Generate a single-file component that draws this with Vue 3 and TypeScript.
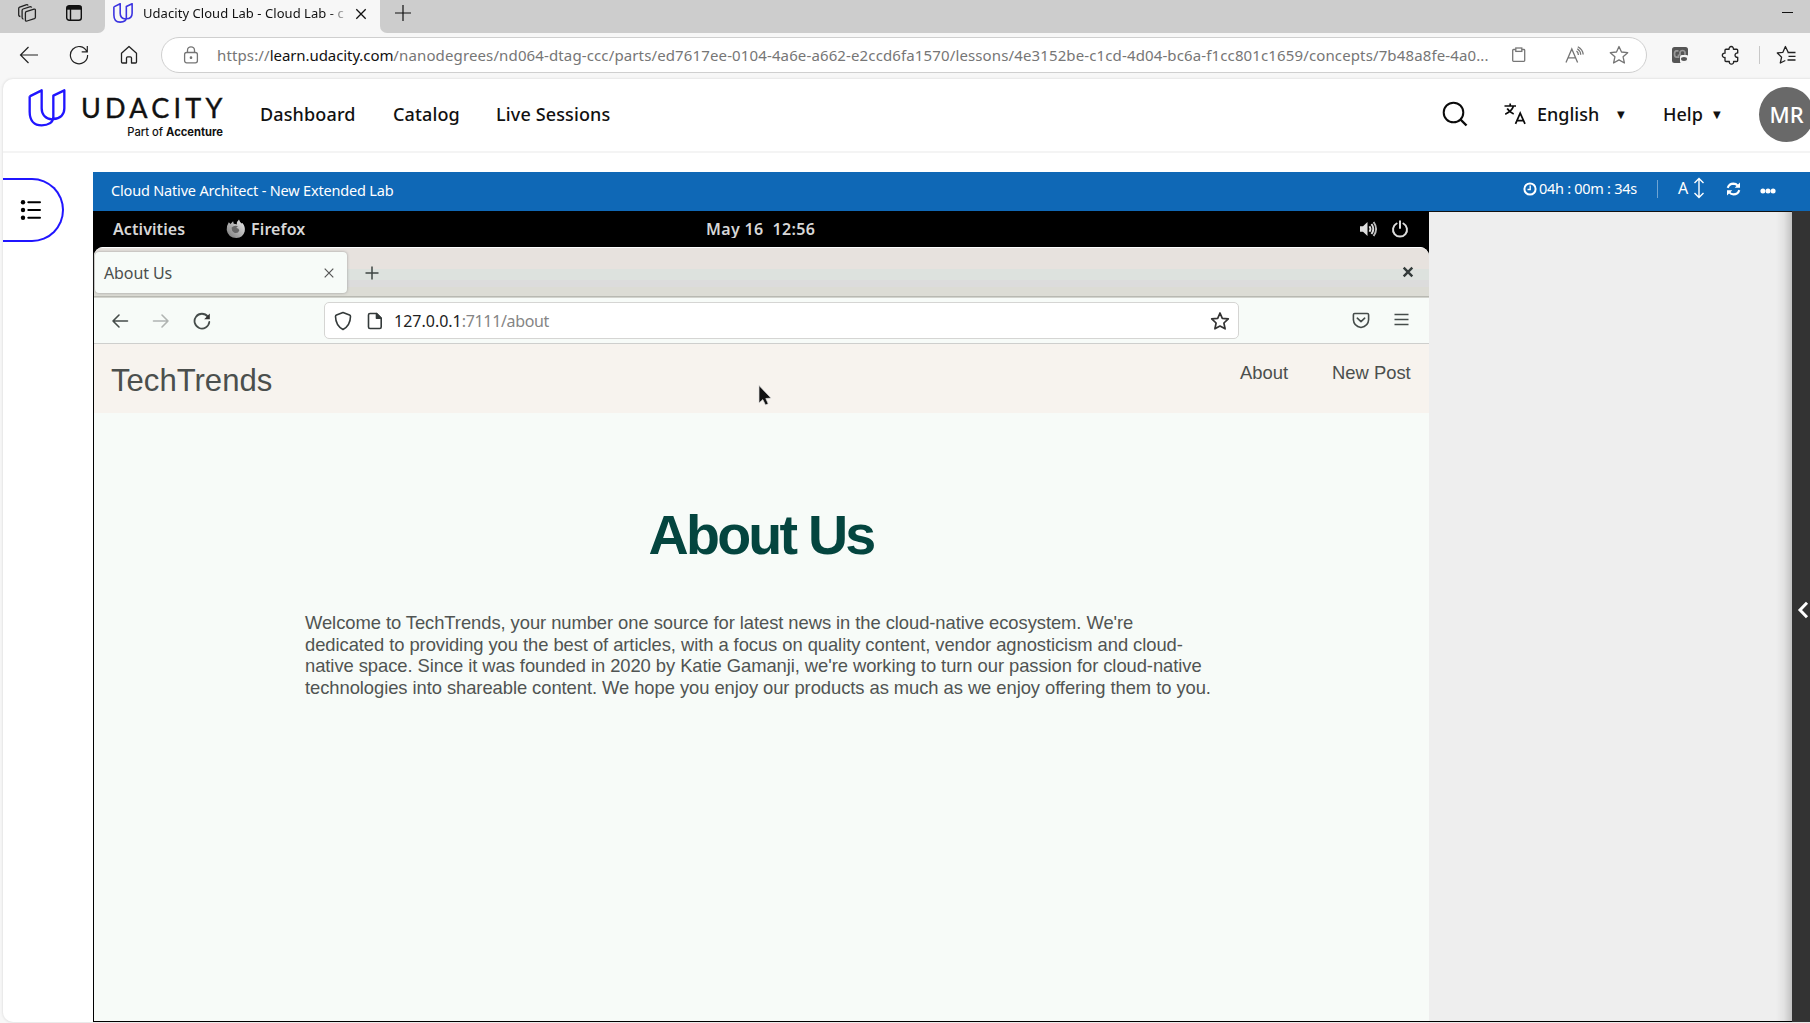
<script setup lang="ts">
import { ref } from 'vue'

const navLinks = ref<string[]>(['Dashboard', 'Catalog', 'Live Sessions'])
const aboutLines: string[] = [
  "Welcome to TechTrends, your number one source for latest news in the cloud-native ecosystem. We're",
  'dedicated to providing you the best of articles, with a focus on quality content, vendor agnosticism and cloud-',
  "native space. Since it was founded in 2020 by Katie Gamanji, we're working to turn our passion for cloud-native",
  'technologies into shareable content. We hope you enjoy our products as much as we enjoy offering them to you.',
]
</script>

<template>
  <div class="window">
    <div class="tabstrip">
      <div class="strip-left">
        <svg class="i-work" width="20" height="20" viewBox="0 0 20 20" fill="none" stroke="#222" stroke-width="1.3" stroke-linejoin="round">
          <path d="M9.2 8.6 17 6.2q1.4-.3 1.4 1v7q0 1-1 1.400L10 18q-1.600.5-1.600-1.100v-7q0-1 .8-1.300z" />
          <path d="M6.500 16.200q-1.400-.1-1.400-1.600V7.400q0-1 1-1.400l6.500-2.200q1.700-.4 2 .9" />
          <path d="M3.400 13.500q-1.700 0-1.700-1.700V5.500q0-1 1-1.400l6.300-2.300q1.600-.5 2.100.6" />
        </svg>
        <svg class="i-tabs" width="18" height="18" viewBox="0 0 18 18" fill="none" stroke="#111" stroke-width="1.400">
          <rect x="1.700" y="1.700" width="14.600" height="14.600" rx="2.500" /><path d="M1.700 3.800h14.600" stroke-width="3.800" /><path d="M5.500 5v11" />
        </svg>
      </div>
      <div class="tab">
        <svg class="i-fav" width="20" height="20" viewBox="86 267 114 114" fill="none" stroke="#3a32e0" stroke-width="9" stroke-linejoin="round">
          <path d="M91 289 127 271V325C127 345 140 357 158 358M91 289V335C91 362 105 376 127 376C145 376 162 369 162 350V287L195 271V325C195 345 182 356 162 357" />
        </svg>
        <span class="tab-title">Udacity Cloud Lab - Cloud Lab - c</span>
        <svg class="i-close" width="12" height="12" viewBox="0 0 12 12" stroke="#111" stroke-width="1.300"><path d="M1.300 1.300l9.400 9.400M10.700 1.300 1.300 10.700" /></svg>
      </div>
      <div class="strip-right">
        <svg class="i-plus" width="16" height="16" viewBox="0 0 16 16" stroke="#111" stroke-width="1.200"><path d="M0 8h16M8 0v16" /></svg>
        <i class="minimize"></i>
      </div>
    </div>

    <div class="toolbar">
      <svg class="i-back" width="20" height="20" viewBox="0 0 20 20" fill="none" stroke="#222" stroke-width="1.200"><path d="M19 10H1.500M9.500 2 1.500 10l8 8" /></svg>
      <svg class="i-reload" width="20" height="20" viewBox="0 0 20 20" fill="none" stroke="#222" stroke-width="1.200"><path d="M17.800 6.500A8.600 8.600 0 1 0 18.600 10M18.300 1v5.800h-5.600" /></svg>
      <svg class="i-home" width="18" height="20" viewBox="0 0 18 20" fill="none" stroke="#222" stroke-width="1.300" stroke-linejoin="round"><path d="M1.500 8.200 9 1.500l7.500 6.700V17q0 1-1 1h-4v-5q0-1.200-1.200-1.200H7.700Q6.500 11.800 6.500 13v5h-4q-1 0-1-1z" /></svg>
      <div class="address">
        <svg class="i-lock" width="16" height="18" viewBox="0 0 16 18" fill="none" stroke="#757575" stroke-width="1.300"><rect x="1.600" y="6.500" width="12.800" height="10.300" rx="2" /><path d="M4.500 6.500V4.300a3.500 3.500 0 0 1 7 0v2.200" /><circle cx="8" cy="11.700" r=".7" fill="#757575" /></svg>
        <span class="url">https://<b>learn.udacity.com</b>/nanodegrees/nd064-dtag-ccc/parts/ed7617ee-0104-4a6e-a662-e2ccd6fa1570/lessons/4e3152be-c1cd-4d04-bc6a-f1cc801c1659/concepts/7b48a8fe-4a0...</span>
        <svg class="i-clip" width="16" height="16" viewBox="0 0 16 16" fill="none" stroke="#777" stroke-width="1.300"><rect x="1.700" y="2.500" width="12" height="11.800" rx=".8" /><rect x="4.800" y="1" width="6" height="3.400" fill="#fff" /></svg>
        <svg class="i-read" width="20" height="18" viewBox="0 0 20 18" fill="none" stroke="#757575" stroke-width="1.300"><path d="M1 16.500 6.800 3 12.600 16.500M3.100 11.800h7.500M11.500 5q1.800 1.200 1.900 4M12.300 2.800q3.200 2 3.400 6M12.800.8q5 2.700 5.400 7.700" /></svg>
        <svg class="i-star" width="20" height="20" viewBox="0 0 20 20" fill="none" stroke="#757575" stroke-width="1.300" stroke-linejoin="round"><path d="M10 1.500 12.500 7l6.200.7-4.600 4.100 1.300 6.200L10 14.900 4.600 18l1.300-6.200L1.300 7.700 7.500 7z" /></svg>
      </div>
      <svg class="i-ext" width="18" height="18" viewBox="0 0 18 18"><rect x="1" y="1" width="16" height="16" rx="2.500" fill="#555" /><path d="M7.500 4.800H5.200Q3.500 5 3.500 8t2 3.200h2V8.500M9 9.500V6.300Q9.300 4.500 11.500 4.500t2.500 1.800V9" fill="none" stroke="#999" stroke-width="1.700" /><rect x="9" y="9" width="8.500" height="8.500" rx="2" fill="#f5f5f5" /><ellipse cx="13" cy="13" rx="3" ry="1.900" fill="#555" /></svg>
      <svg class="i-puzzle" width="20" height="20" viewBox="0 0 20 20" fill="none" stroke="#222" stroke-width="1.350" stroke-linejoin="round"><path d="M5 4.200h3.100a2.200 2.200 0 1 1 4.300 0h3.300q1 0 1 1V8a2.200 2.200 0 1 0 0 4.300v3.200q0 1-1 1h-3.100a2.200 2.200 0 1 1-4.300 0H5q-1 0-1-1v-3a2.200 2.200 0 1 1 0-4.300V5.200q0-1 1-1z" /></svg>
      <i class="tool-sep"></i>
      <svg class="i-favs" width="20" height="20" viewBox="0 0 20 20" fill="none" stroke="#222" stroke-width="1.300" stroke-linejoin="round"><path d="M12.300 7.500 9.400 1.500 6.900 7.300 1.300 8l4.300 4.200L4.300 18l5-2.500M11.500 7.500h8M12.500 11.300h7M11.500 15h8" /></svg>
    </div>

    <div class="page">
      <header class="site-head">
        <svg class="i-logo" width="38" height="38" viewBox="86 267 114 114" fill="none" stroke="#2015ff" stroke-width="7" stroke-linejoin="round">
          <path d="M91 289 127 271V325C127 345 140 357 158 358M91 289V335C91 362 105 376 127 376C145 376 162 369 162 350V287L195 271V325C195 345 182 356 162 357" />
        </svg>
        <div class="brand">
          <span class="wordmark">UDACITY</span>
          <span class="partof">Part of <b>Accenture</b></span>
        </div>
        <nav class="site-nav"><a v-for="(l, i) in navLinks" :key="l" :class="'nav-' + i">{{ l }}</a></nav>
        <svg class="i-search" width="26" height="26" viewBox="0 0 26 26" fill="none" stroke="#0b0b0b" stroke-width="2"><circle cx="11.500" cy="11.500" r="9.800" /><path d="m18.500 18.500 6 6" stroke-width="2.400" /></svg>
        <svg class="i-lang" width="22" height="22" viewBox="0 0 22 22" fill="none" stroke="#0b0b0b" stroke-width="1.700"><path d="M.5 3h11.500M6.200.500V3M1.200 11.300Q8 8 9.500 3M3.200 5.500q2 3.500 6.500 5.500M11.500 20.800l4.700-10.600L21 20.800M13 17.600h6.400" /></svg>
        <span class="lang">English</span><span class="caret c1">▼</span>
        <span class="help">Help</span><span class="caret c2">▼</span>
        <div class="avatar">MR</div>
      </header>

      <div class="body">
        <aside class="side">
          <div class="pill">
            <svg width="22" height="22" viewBox="0 0 22 22" stroke="#000" stroke-width="2" stroke-linecap="round"><path d="M8.300 3.300H20M8.300 11H20M8.300 18.800H20" /><g stroke="none"><circle cx="3" cy="3.300" r="2.200" /><circle cx="3" cy="11" r="2.200" /><circle cx="3" cy="18.800" r="2.200" /></g></svg>
          </div>
        </aside>

        <main class="lab">
          <div class="lab-bar">
            <span class="lab-title">Cloud Native Architect - New Extended Lab</span>
            <svg class="i-clock" width="14" height="14" viewBox="0 0 14 14" fill="none" stroke="#fff" stroke-width="2"><circle cx="7" cy="7" r="5.600" /><path d="M7.200 3.500v4H4.500" stroke-width="1.400" /></svg>
            <span class="timer">04h : 00m : 34s</span>
            <i class="lab-sep"></i>
            <span class="font-a">A</span>
            <svg class="i-updown" width="12" height="22" viewBox="0 0 12 22" fill="none" stroke="#fff" stroke-width="1.400"><path d="M6 1.500v19M1.500 6 6 1.500 10.500 6M1.500 16 6 20.500l4.500-4.500" /></svg>
            <svg class="i-sync" width="15" height="14" viewBox="0 0 15 14" fill="none" stroke="#fff" stroke-width="2.100"><path d="M1.700 5.900Q3 1.700 7.500 1.600q2.500 0 4.200 2M13.300 8.100Q12 12.300 7.500 12.400q-2.500 0-4.200-2" /><path d="M14 .5v5.300H8.700zM1 13.500V8.200h5.300z" fill="#fff" stroke="none" /></svg>
            <svg class="i-dots" width="16" height="6" viewBox="0 0 16 6" fill="#fff"><circle cx="2.900" cy="3" r="2.500" /><circle cx="8" cy="3" r="2.500" /><circle cx="13.100" cy="3" r="2.500" /></svg>
          </div>

          <div class="lab-body">
            <section class="remote">
              <div class="gnome">
                <span class="activities">Activities</span>
                <svg class="i-fox" width="20" height="20" viewBox="0 0 20 20"><defs><linearGradient id="fox" x1="1" y1="0" x2="0" y2="1"><stop offset="0" stop-color="#eee" /><stop offset="1" stop-color="#777" /></linearGradient></defs><path d="M2.800 3.200 4.500 5l2.600-2.700.6 2.500q1.800 0 3 .7Q10.500 2.500 13 .5q.5 2.300 2.800 4L16.500 4q3.200 4 2.200 8.500Q17 18.500 10.500 19 2 18.800.700 11 .5 6.500 2.800 3.200z" fill="url(#fox)" /><path d="M7 7.500q3-1.500 5 0-2 .5-1.500 1.500 2.500 0 2.800 2.500-1.500 3.500-5 2.200Q5.500 12 5.500 8.800z" fill="#666" /></svg>
                <span class="ff">Firefox</span>
                <span class="clock">May 16&nbsp; 12:56</span>
                <svg class="i-vol" width="19" height="18" viewBox="0 0 19 18" fill="none" stroke="#ddd" stroke-width="1.900"><path d="M1 6.200h3L8.500 2v14L4 11.800H1z" fill="#ddd" stroke="none" /><path d="M10.500 6.200q2 2.800 0 5.600M12.500 4q3.600 5 0 10" /><path d="M14.600 2q5 7 0 14" stroke="#bbb" /></svg>
                <svg class="i-power" width="18" height="18" viewBox="0 0 18 18" fill="none" stroke="#ddd" stroke-width="2" stroke-linecap="round"><path d="M5.600 3.500a7 7 0 1 0 6.800 0M9 1.200V8" /></svg>
              </div>
              <div class="ff-tabs">
                <div class="ff-tab">
                  <span>About Us</span>
                  <svg width="10" height="10" viewBox="0 0 10 10" stroke="#555" stroke-width="1.200"><path d="m.7.7 8.600 8.600M9.300.7.7 9.300" /></svg>
                </div>
                <svg class="ff-plus" width="14" height="14" viewBox="0 0 14 14" stroke="#3e4543" stroke-width="1.500"><path d="M.5 7h13M7 .5v13" /></svg>
                <svg class="ff-close" width="12" height="12" viewBox="0 0 12 12" stroke="#343c3b" stroke-width="2.400"><path d="m1.700 1.700 8.600 8.600M10.300 1.700 1.700 10.300" /></svg>
              </div>
              <div class="ff-bar">
                <svg class="f-back" width="18" height="18" viewBox="0 0 18 18" fill="none" stroke="#454c4a" stroke-width="1.600" stroke-linecap="round" stroke-linejoin="round"><path d="M16.500 9H2M8 3 2 9l6 6" /></svg>
                <svg class="f-fwd" width="18" height="18" viewBox="0 0 18 18" fill="none" stroke="#b0b4b2" stroke-width="1.600" stroke-linecap="round" stroke-linejoin="round"><path d="M1.500 9H16M10 3l6 6-6 6" /></svg>
                <svg class="f-reload" width="18" height="18" viewBox="0 0 18 18" fill="none" stroke="#454c4a" stroke-width="1.800" stroke-linecap="round"><path d="M14.800 4.600A7.400 7.400 0 1 0 16.300 10" /><path d="M16.800 1.500v5.700h-5.600z" fill="#333" stroke="none" /></svg>
                <div class="ff-url">
                  <svg class="f-shield" width="18" height="20" viewBox="0 0 18 20" fill="none" stroke="#343a3a" stroke-width="1.600" stroke-linejoin="round"><path d="M9 1.500 15.500 4q1 .4 1 1.400-.2 9-7.500 13.100Q1.700 14.400 1.500 5.400q0-1 1-1.400z" /></svg>
                  <svg class="f-doc" width="16" height="18" viewBox="0 0 16 18" fill="none" stroke="#343a3a" stroke-width="1.600" stroke-linejoin="round"><path d="M3 1.500h6.500l4.700 4.700V15q0 1.500-1.500 1.500H3Q1.500 16.500 1.500 15V3Q1.500 1.500 3 1.500z" /><path d="M9.500 1.500v4.700h4.700z" fill="#343a3a" /></svg>
                  <span class="f-text">127.0.0.1<em>:7111/about</em></span>
                  <svg class="f-star" width="20" height="20" viewBox="0 0 20 20" fill="none" stroke="#333" stroke-width="1.700" stroke-linejoin="round"><path d="M10 2 12.300 7.300l6 .5-4.400 4.200 1.200 5.800L10 15l-5.100 2.800L6.100 12 1.700 7.800l6-.5z" /></svg>
                </div>
                <svg class="f-pocket" width="18" height="17" viewBox="0 0 18 17" fill="none" stroke="#454c4a" stroke-width="1.600" stroke-linecap="round" stroke-linejoin="round"><path d="M2.700 1.500h12.600q1.300 0 1.300 1.300v5q-.3 6.500-7.600 7.700Q1.700 14.300 1.400 7.800v-5q0-1.300 1.300-1.300zM5.300 6.200 9 9.600l3.700-3.400" /></svg>
                <svg class="f-menu" width="15" height="13" viewBox="0 0 15 13" stroke="#454c4a" stroke-width="1.500"><path d="M.5 1.500h14M.5 6.500h14M.5 11.500h14" /></svg>
              </div>
              <div class="tt-head">
                <span class="tt-brand">TechTrends</span>
                <span class="tt-about">About</span>
                <span class="tt-new">New Post</span>
                <svg class="cursor" width="14" height="21" viewBox="0 0 14 21"><path d="M1 .5v17.500l3.800-3.400L7.500 20l2.700-1.300-2.400-5.200 5.200-.4z" fill="#111" stroke="#ddd" stroke-width=".7" /></svg>
              </div>
              <h1>About Us</h1>
              <p class="about"><span v-for="(l, i) in aboutLines" :key="i">{{ l }}</span></p>
            </section>
            <div class="void"></div>
            <div class="rail"><svg width="12" height="18" viewBox="0 0 12 18" fill="none" stroke="#fff" stroke-width="3"><path d="M10 1.800 3 9l7 7.200" /></svg></div>
          </div>
        </main>
      </div>
    </div>
  </div>
</template>

<style>
body { background: #f7f7f7; overflow: hidden; }
</style>

<style scoped>
* { box-sizing: border-box; }
svg { display: block; flex: none; }
span { white-space: nowrap; flex: none; }
.window { width: 1810px; height: 1023px; display: flex; flex-direction: column; overflow: hidden; background: #f7f7f7; font-family: "Noto Sans", sans-serif; color: #111; }

.tabstrip { height: 33px; flex: none; display: flex; background: #f7f7f7; }
.strip-left { width: 105px; background: #cdcdcd; border-radius: 0 0 7px 0; display: flex; }
.i-work { margin: 3px 0 0 17px; }
.i-tabs { margin: 4px 0 0 28px; }
.tab { width: 275px; display: flex; }
.i-fav { margin: 3px 0 0 8px; }
.tab-title { width: 203px; margin: 4px 0 0 10px; font-size: 13px; line-height: 19px; overflow: hidden; letter-spacing: 0.050px; -webkit-mask-image: linear-gradient(90deg, #000 186px, transparent 206px); mask-image: linear-gradient(90deg, #000 186px, transparent 206px); }
.i-close { margin: 8px 0 0 9px; }
.strip-right { flex: 1; background: #cdcdcd; border-radius: 0 0 0 7px; display: flex; justify-content: space-between; }
.i-plus { margin: 5px 0 0 15px; }
.minimize { width: 11px; height: 1px; background: #111; margin: 12px 17px 0 0; }

.toolbar { height: 46px; flex: none; display: flex; align-items: center; padding-bottom: 2px; }
.i-back { margin-left: 19px; }
.i-reload { margin-left: 30px; }
.i-home { margin-left: 31px; }
.address { width: 1486px; height: 36px; margin-left: 23px; background: #fff; border: 1px solid #cfcfcf; border-radius: 18px; display: flex; align-items: center; }
.i-lock { margin-left: 21px; }
.url { width: 1280px; margin-left: 18px; font-size: 15px; color: #767676; letter-spacing: 0.128px; }
.url b { font-weight: 400; color: #111; letter-spacing: -0.080px; }
.i-clip { margin-left: 14px; }
.i-read { margin-left: 38px; }
.i-star { margin-left: 24px; }
.i-ext { margin-left: 24px; }
.i-puzzle { margin-left: 32px; }
.tool-sep { width: 1px; height: 18px; background: #c8c8c8; margin-left: 18px; }
.i-favs { margin-left: 16px; }

.page { width: 1807px; height: 943px; margin-left: 3px; flex: none; background: #fff; border-radius: 10px 0 0 10px; box-shadow: 0 0 2px 1px #e6e6e6; display: flex; flex-direction: column; overflow: hidden; }
.site-head { height: 74px; flex: none; border-bottom: 2px solid #f4f4f4; display: flex; align-items: flex-start; }
.i-logo { margin: 10px 0 0 25px; }
.brand { width: 145px; margin: 15px 0 0 15px; display: flex; flex-direction: column; }
.wordmark { font: 400 27px/27px Lato, sans-serif; letter-spacing: 4.200px; -webkit-text-stroke: .4px #111; }
.partof { font: 500 11.200px/14px Inter, sans-serif; align-self: flex-end; margin: 4px 3px 0 0; }
.partof b { font-weight: 700; }
.site-nav { width: 1215px; flex: none; display: flex; margin-top: 23px; font-size: 18px; font-weight: 500; line-height: 25px; letter-spacing: 0.140px; }
.nav-0 { width: 133px; margin-left: 34px; }
.nav-1 { width: 103px; }
.i-search { margin: 22px 0 0 1px; }
.i-lang { margin: 24px 0 0 36px; }
.lang, .help { font-size: 18px; font-weight: 500; line-height: 25px; margin-top: 23px; }
.lang { width: 80px; margin-left: 11px; }
.help { width: 50px; margin-left: 36px; }
.caret { width: 10px; font: 10px/12px "DejaVu Sans", sans-serif; margin-top: 30px; }
.avatar { width: 55px; height: 55px; flex: none; margin: 8px 0 0 36px; border-radius: 50%; background: #696969; color: #fff; font-size: 22px; font-weight: 500; line-height: 55px; text-align: center; }

.body { flex: 1; display: flex; min-height: 0; }
.side { width: 90px; flex: none; }
.pill { width: 61px; height: 64px; margin-top: 25px; border: 2px solid #2015ff; border-left: 0; border-radius: 0 32px 32px 0; padding: 19px 0 0 17px; }
.lab { width: 1717px; margin-top: 19px; display: flex; flex-direction: column; }
.lab-bar { height: 39px; flex: none; background: #0f68b6; color: #fff; display: flex; align-items: flex-start; font-size: 14.500px; line-height: 20px; }
.lab-title { width: 1412px; margin: 8px 0 0 18px; letter-spacing: -0.180px; }
.i-clock { margin-top: 10px; }
.timer { width: 117px; margin: 6px 0 0 2px; letter-spacing: -0.280px; }
.lab-sep { width: 1px; height: 18px; margin: 8px 0 0 1px; background: #6fa4d3; }
.font-a { width: 10px; margin: 6px 0 0 20px; font-size: 16px; }
.i-updown { margin: 5px 0 0 5px; }
.i-sync { margin: 10px 0 0 21px; }
.i-dots { margin: 16px 0 0 19px; }

.lab-body { flex: 1; display: flex; min-height: 0; }
.remote { width: 1336px; flex: none; border-left: 1px solid #000; border-bottom: 1px solid #000; background: #f7fbf8; display: flex; flex-direction: column; color: #4b4f4d; }
.gnome { height: 36px; flex: none; background: #000; color: #d7d7d7; display: flex; font-size: 16px; font-weight: 600; line-height: 22px; padding-top: 7px; }
.activities { width: 72px; margin-left: 19px; letter-spacing: 0.080px; }
.i-fox { margin: 1px 0 0 41px; }
.ff { width: 55px; margin-left: 5px; letter-spacing: 0.120px; }
.clock { width: 110px; margin-left: 400px; letter-spacing: 0.350px; }
.i-vol { margin: 2px 0 0 543px; }
.i-power { margin: 2px 0 0 13px; }
.ff-tabs { height: 51px; flex: none; display: flex; background: linear-gradient(#fff 0 1px, #e7e2de 1px 22px, #dde2de 22px 33px, #dcdcdc 33px 40px, #dcdcd5 40px 49px, #b8b9b2 49px 50px, #d2d3cd 50px); border-radius: 9px 9px 0 0; box-shadow: 0 -9px 0 #000; }
.ff-tab { width: 252px; height: 41px; margin: 5px 0 0 1px; background: #f7fbf8; border-radius: 4px; box-shadow: 0 0 3px #999; display: flex; align-items: center; }
.ff-tab span { width: 220px; margin-left: 9px; font-size: 16px; line-height: 22px; letter-spacing: -0.100px; }
.ff-plus { margin: 19px 0 0 18px; }
.ff-close { margin: 19px 0 0 1023px; }
.ff-bar { height: 46px; flex: none; display: flex; align-items: flex-start; border-bottom: 1px solid #cecfcd; }
.f-back { margin: 14px 0 0 17px; }
.f-fwd { margin: 14px 0 0 23px; }
.f-reload { margin: 14px 0 0 23px; }
.ff-url { width: 915px; height: 37px; margin: 4px 0 0 113px; background: #fff; border: 1px solid #d5d5d3; border-radius: 5px; display: flex; align-items: center; }
.f-shield { margin-left: 9px; }
.f-doc { margin-left: 15px; }
.f-text { width: 817px; margin-left: 11px; font-size: 16px; line-height: 22px; color: #222; }
.f-text em { font-style: normal; color: #858585; letter-spacing: -0.350px; }
.f-star { margin-left: -1px; }
.f-pocket { margin: 14px 0 0 113px; }
.f-menu { margin: 15px 0 0 24px; }
.tt-head { height: 69px; flex: none; background: #f7f3ee; display: flex; font-family: "Liberation Sans", sans-serif; position: relative; }
.tt-brand { width: 1129px; margin: 19px 0 0 17px; font-size: 31.100px; line-height: 36px; }
.tt-about, .tt-new { font-size: 18.400px; line-height: 22px; margin-top: 18px; }
.tt-about { width: 92px; }
.cursor { position: absolute; left: 664px; top: 41px; }
h1 { margin: 90px 1px 0 0; text-align: center; font: 700 55.600px/64px "Liberation Sans", sans-serif; letter-spacing: -2.780px; color: #04453f; }
.about { margin: 45px 0 0 211px; font: 18.400px/21.700px "Liberation Sans", sans-serif; letter-spacing: -0.068px; display: flex; flex-direction: column; color: #505452; }
.void { width: 363px; flex: none; border-top: 1px solid #111; border-bottom: 1px solid #000; background: linear-gradient(90deg, transparent 347px, #e2e2e2 355px, #c2c2c2 363px), #eee; }
.rail { width: 18px; background: #333; padding: 390px 0 0 5px; }
</style>
